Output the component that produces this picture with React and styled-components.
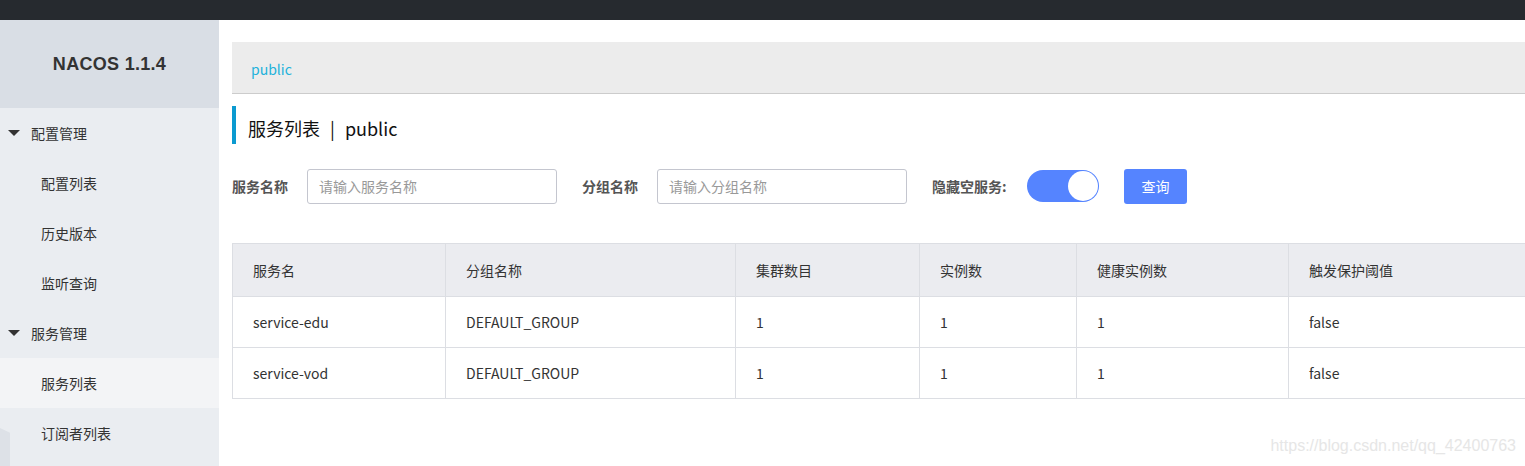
import React from 'react'
import styled, { createGlobalStyle } from 'styled-components'

const GlobalStyle = createGlobalStyle`
    html, body {
        margin: 0;
        padding: 0;
        background: #fff;
        font-family: "Noto Sans CJK SC", "Liberation Sans", sans-serif;
        overflow: hidden;
    }
    * {
        box-sizing: border-box;
    }
`

const Page = styled.div`
    width: 1525px;
    height: 466px;
    display: flex;
    flex-direction: column;
`
const TopBar = styled.div`
    height: 20px;
    background-color: #262a2f;
    flex-shrink: 0;
`
const Body = styled.div`
    flex-grow: 1;
    display: flex;
    min-height: 0;
`
const Sidebar = styled.div`
    width: 219px;
    flex-shrink: 0;
    background-color: #eaedf1;
    position: relative;
    overflow: hidden;
`
const Logo = styled.div`
    height: 88px;
    background-color: #d9dee5;
    display: flex;
    align-items: center;
    justify-content: center;
    font-family: "Liberation Sans", sans-serif;
    font-size: 18px;
    font-weight: bold;
    color: #333;
    letter-spacing: 0.3px;
`
const MenuGroup = styled.div`
    height: 50px;
    display: flex;
    align-items: center;
    padding-left: 8px;
    font-size: 14px;
    color: #333;
`
const Arrow = styled.span`
    width: 0;
    height: 0;
    border-left: 6px solid transparent;
    border-right: 6px solid transparent;
    border-top: 6px solid #333;
    margin-right: 11px;
`
const MenuItem = styled.div`
    height: 50px;
    display: flex;
    align-items: center;
    padding-left: 41px;
    font-size: 14px;
    color: #333;
    background-color: ${props => (props.active ? '#f3f4f6' : 'transparent')};
`
const Corner = styled.div`
    position: absolute;
    left: -10px;
    top: 408px;
    width: 20px;
    height: 60px;
    background-color: #dde1e7;
    transform: skewY(25deg);
`
const Main = styled.div`
    flex-grow: 1;
    min-width: 0;
    overflow: hidden;
    padding: 22px 0 0 13px;
    position: relative;
`
const Breadcrumb = styled.div`
    height: 52px;
    background-color: #ececec;
    border-bottom: 1px solid #cccccc;
    display: flex;
    align-items: center;
    padding-left: 19px;
    padding-top: 3px;
    font-size: 14px;
    color: #22b2db;
`
const Title = styled.div`
    margin-top: 12px;
    height: 38px;
    border-left: 4px solid #0b9ad0;
    display: flex;
    align-items: center;
    padding-left: 12px;
    padding-top: 5px;
    font-size: 18px;
    color: #111;
`
const Sep = styled.span`
    margin: 0 10px;
`
const Form = styled.div`
    margin-top: 25px;
    height: 34px;
    display: flex;
    align-items: center;
`
const Label = styled.div`
    width: ${props => props.width}px;
    flex-shrink: 0;
    font-size: 14px;
    font-weight: bold;
    color: #555;
`
const Input = styled.div`
    width: 250px;
    height: 35px;
    border: 1px solid #c4c6cf;
    border-radius: 3px;
    display: flex;
    align-items: center;
    padding-left: 11px;
    font-size: 14px;
    color: #999;
    margin-right: 25px;
`
const Switch = styled.div`
    width: 72px;
    height: 32px;
    border-radius: 16px;
    background-color: #5584ff;
    display: flex;
    align-items: center;
    justify-content: flex-end;
    padding-right: 1px;
    margin-right: 25px;
`
const Knob = styled.div`
    width: 30px;
    height: 30px;
    border-radius: 50%;
    background-color: #fff;
`
const Button = styled.div`
    width: 63px;
    height: 35px;
    border-radius: 3px;
    background-color: #5584ff;
    color: #fff;
    font-size: 14px;
    display: flex;
    align-items: center;
    justify-content: center;
`
const Table = styled.div`
    margin-top: 40px;
    border: 1px solid #dcdee3;
    border-right: none;
    width: 1310px;
`
const Row = styled.div`
    display: grid;
    grid-template-columns: 212px 290px 184px 157px 212px 1fr;
    height: ${props => (props.head ? 52 : 51)}px;
    background-color: ${props => (props.head ? '#ebecf0' : '#fff')};
    border-top: ${props => (props.head ? 'none' : '1px solid #dcdee3')};
`
const Cell = styled.div`
    display: flex;
    align-items: center;
    padding-left: 20px;
    font-size: 14px;
    color: #333;
    border-left: ${props => (props.first ? 'none' : '1px solid #dcdee3')};
`
const Watermark = styled.div`
    position: absolute;
    right: 9px;
    bottom: 11px;
    font-family: "Liberation Sans", sans-serif;
    font-size: 16px;
    color: #e6e6e6;
`

const headers = ['服务名', '分组名称', '集群数目', '实例数', '健康实例数', '触发保护阈值']
const rows = [
    ['service-edu', 'DEFAULT_GROUP', '1', '1', '1', 'false'],
    ['service-vod', 'DEFAULT_GROUP', '1', '1', '1', 'false'],
]

export default function App() {
    return (
        <Page>
            <GlobalStyle />
            <TopBar />
            <Body>
                <Sidebar>
                    <Logo>NACOS 1.1.4</Logo>
                    <MenuGroup>
                        <Arrow />
                        配置管理
                    </MenuGroup>
                    <MenuItem>配置列表</MenuItem>
                    <MenuItem>历史版本</MenuItem>
                    <MenuItem>监听查询</MenuItem>
                    <MenuGroup>
                        <Arrow />
                        服务管理
                    </MenuGroup>
                    <MenuItem active>服务列表</MenuItem>
                    <MenuItem>订阅者列表</MenuItem>
                    <Corner />
                </Sidebar>
                <Main>
                    <Breadcrumb>public</Breadcrumb>
                    <Title>
                        服务列表<Sep>|</Sep>public
                    </Title>
                    <Form>
                        <Label width={75}>服务名称</Label>
                        <Input>请输入服务名称</Input>
                        <Label width={75}>分组名称</Label>
                        <Input>请输入分组名称</Input>
                        <Label width={95}>隐藏空服务:</Label>
                        <Switch>
                            <Knob />
                        </Switch>
                        <Button>查询</Button>
                    </Form>
                    <Table>
                        <Row head>
                            {headers.map((h, i) => (
                                <Cell key={i} first={i === 0}>
                                    {h}
                                </Cell>
                            ))}
                        </Row>
                        {rows.map((r, ri) => (
                            <Row key={ri}>
                                {r.map((v, i) => (
                                    <Cell key={i} first={i === 0}>
                                        {v}
                                    </Cell>
                                ))}
                            </Row>
                        ))}
                    </Table>
                    <Watermark>https://blog.csdn.net/qq_42400763</Watermark>
                </Main>
            </Body>
        </Page>
    )
}
